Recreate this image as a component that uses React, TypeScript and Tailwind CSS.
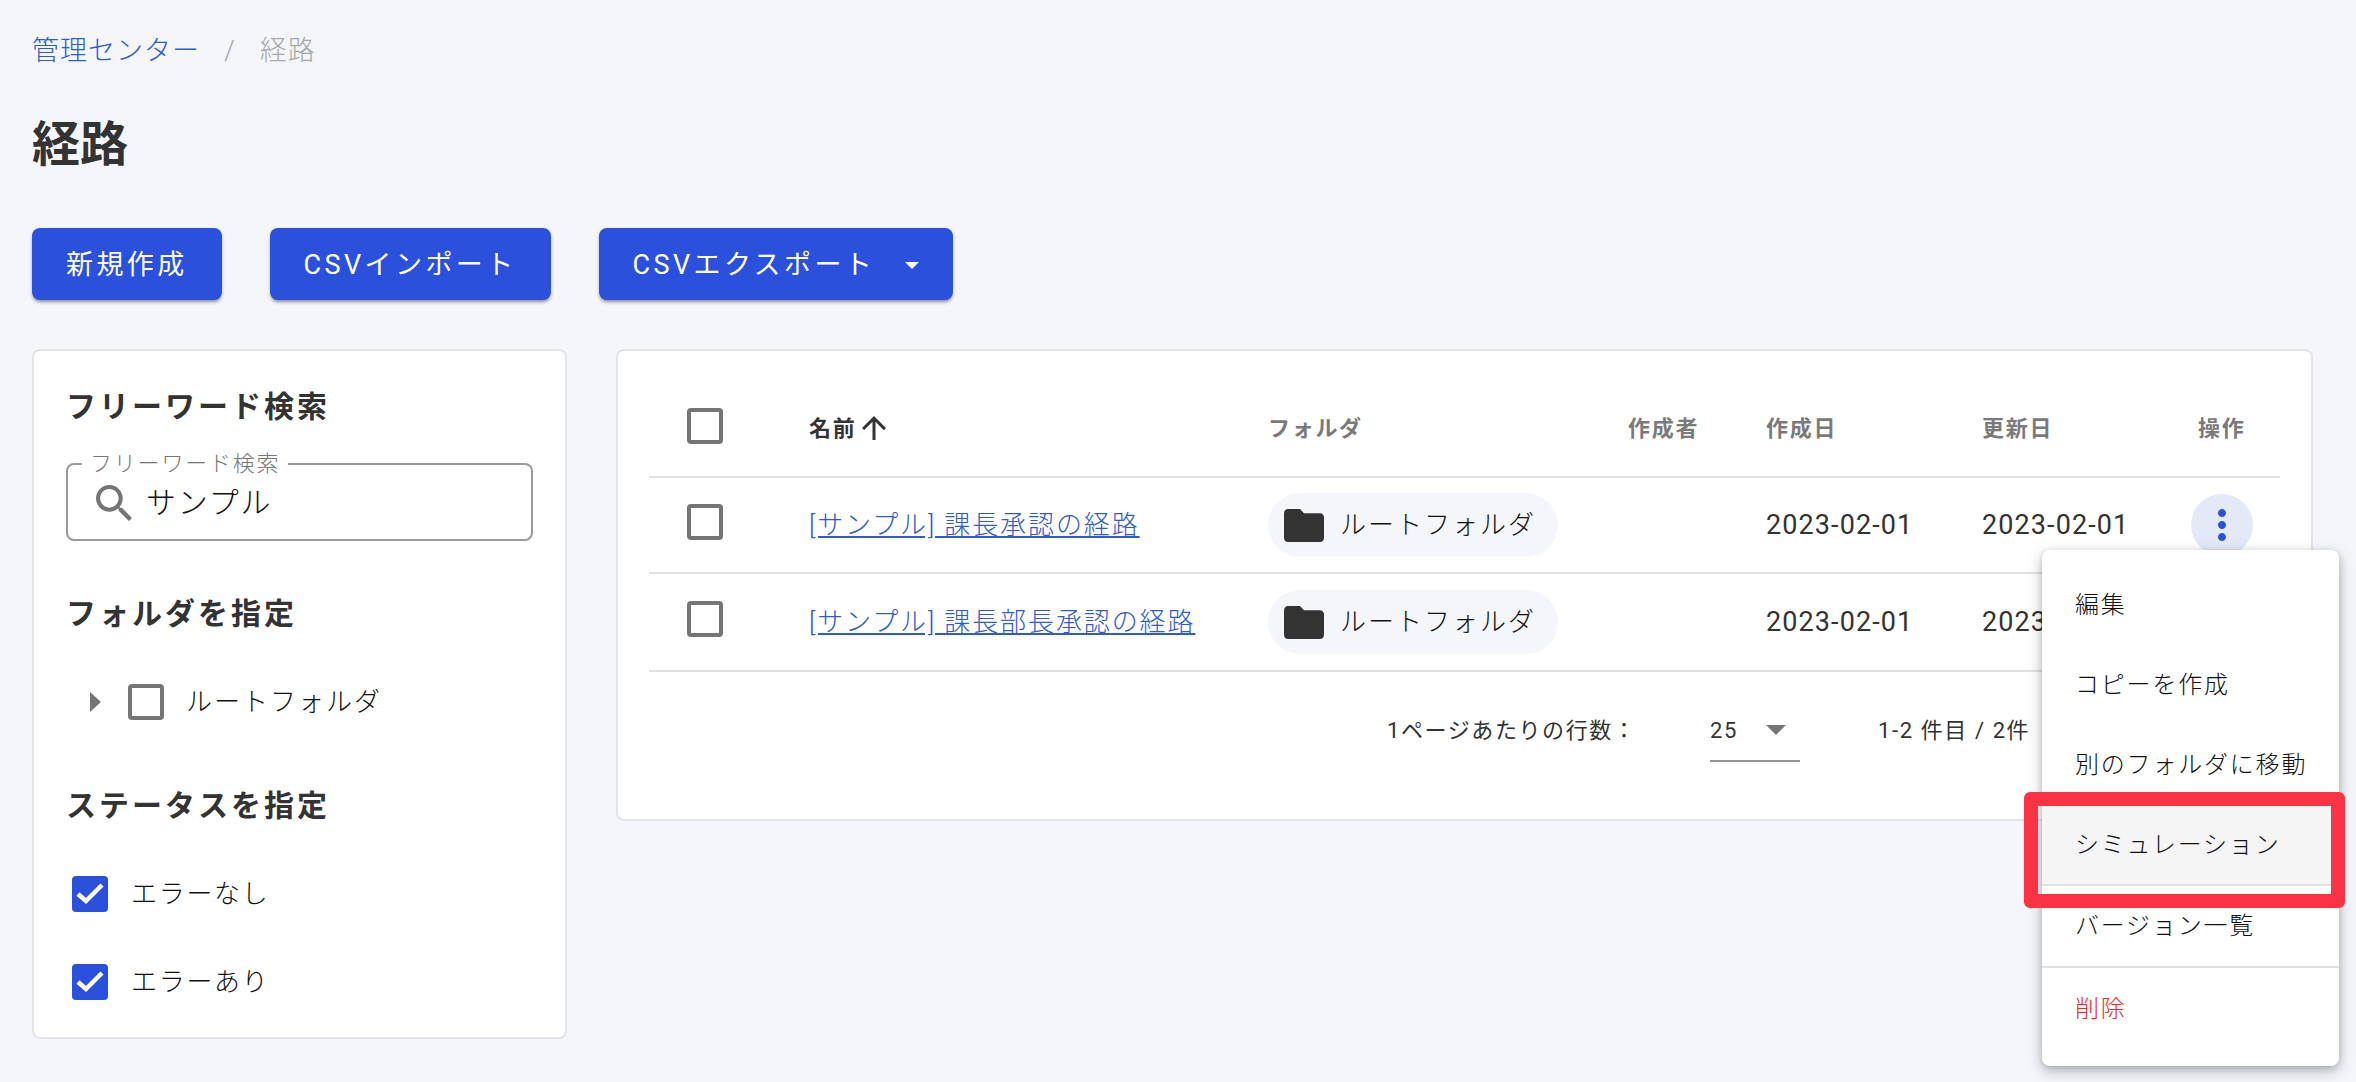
import React from "react";

const ROWS = ["[サンプル] 課長承認の経路", "[サンプル] 課長部長承認の経路"];
const COLS = "grid grid-cols-[160px_459px_360px_138px_216px_216px_82px] items-center";

const Box = () => (
  <span className="block w-[36px] h-[36px] rounded-[4px] border-[4px] border-[#757575]" />
);

const Checked = () => (
  <span className="flex items-center justify-center w-[36px] h-[36px] rounded-[4px] bg-[#2a50dc]">
    <svg viewBox="0 0 36 36" className="w-[36px] h-[36px]" fill="none" stroke="#fff" strokeWidth="4.5">
      <polyline points="6,18 14,25 30,9" />
    </svg>
  </span>
);

const Title = ({ children }: { children: React.ReactNode }) => (
  <h2 className="h-[40px] leading-[40px] text-[30px] font-bold tracking-[3px] text-[#333]">
    {children}
  </h2>
);

const Btn = ({ children }: { children: React.ReactNode }) => (
  <button className="flex items-center h-[72px] px-[34px] pt-[2px] rounded-[8px] bg-[#2a50dc] text-white text-[27px] font-normal tracking-[3.4px] shadow-[0_3px_3px_-1px_rgba(0,0,0,0.3),0_2px_4px_rgba(0,0,0,0.16)]">
    {children}
  </button>
);

const FolderChip = () => (
  <span className="flex items-center w-[290px] h-[64px] pl-[16px] rounded-full bg-[#f4f6fa] text-[26px] font-light text-[#111] tracking-[2px]">
    <svg viewBox="2 4 20 16" className="w-[40px] h-[33px]" fill="#333" preserveAspectRatio="none">
      <path d="M10 4H4c-1.1 0-1.99.9-1.99 2L2 18c0 1.1.9 2 2 2h16c1.1 0 2-.9 2-2V8c0-1.1-.9-2-2-2h-8l-2-2z" />
    </svg>
    <span className="ml-[16px]">ルートフォルダ</span>
  </span>
);

export default function App() {
  return (
    <div className="relative h-[1082px] overflow-hidden bg-[#f4f6fa] pt-[31px] px-[32px] text-[#333] font-[Roboto,'Noto_Sans_CJK_JP',sans-serif]">
      <nav className="flex items-center h-[40px] text-[27px] font-light tracking-[1px]">
        <span className="text-[#2f5bd0]">管理センター</span>
        <span className="mx-[24px] text-[#a8a8a8]">/</span>
        <span className="text-[#a8a8a8]">経路</span>
      </nav>

      <h1 className="mt-[42px] h-[64px] leading-[64px] text-[48px] font-bold">経路</h1>

      <div className="mt-[51px] flex gap-[48px]">
        <Btn>新規作成</Btn>
        <Btn>CSVインポート</Btn>
        <Btn>
          CSVエクスポート
          <span className="ml-[30px] w-0 h-0 border-x-[7px] border-x-transparent border-t-[7px] border-t-white" />
        </Btn>
      </div>

      <div className="mt-[49px] flex items-start gap-[49px] pr-[11px]">
        <aside className="w-[535px] h-[690px] shrink-0 rounded-[8px] border-2 border-[#e2e4e8] bg-white px-[32px] pt-[36px]">
          <Title>フリーワード検索</Title>
          <div className="relative mt-[36px] flex items-center h-[78px] pl-[28px] rounded-[8px] border-2 border-[#9a9a9a]">
            <span className="absolute left-[14px] -top-[14px] px-[8px] bg-white text-[22px] font-light leading-[26px] tracking-[1.8px] text-[#777]">
              フリーワード検索
            </span>
            <svg viewBox="3 3 17.5 17.5" className="w-[36px] h-[36px] mt-[2px]" fill="#757575">
              <path d="M15.5 14h-.79l-.28-.27C15.41 12.59 16 11.11 16 9.5 16 5.91 13.09 3 9.5 3S3 5.91 3 9.5 5.91 16 9.5 16c1.61 0 3.09-.59 4.23-1.57l.27.28v.79l5 4.99L20.49 19l-4.99-5zm-6 0C7.01 14 5 11.99 5 9.5S7.01 5 9.5 5 14 7.01 14 9.5 11.99 14 9.5 14z" />
            </svg>
            <span className="ml-[14px] text-[30px] font-light text-[#111] tracking-[1.8px]">サンプル</span>
          </div>

          <div className="mt-[53px]">
            <Title>フォルダを指定</Title>
          </div>
          <div className="mt-[50px] flex items-center h-[36px] pl-[24px] text-[26px] font-light text-[#111] tracking-[2px]">
            <span className="w-0 h-0 border-y-[10px] border-y-transparent border-l-[11px] border-l-[#757575]" />
            <span className="ml-[27px]"><Box /></span>
            <span className="ml-[22px]">ルートフォルダ</span>
          </div>

          <div className="mt-[66px]">
            <Title>ステータスを指定</Title>
          </div>
          <div className="mt-[50px] flex flex-col gap-[52px] pl-[6px] text-[26px] font-light text-[#111] tracking-[1.7px]">
            <div className="flex items-center h-[36px]">
              <Checked />
              <span className="ml-[23px]">エラーなし</span>
            </div>
            <div className="flex items-center h-[36px]">
              <Checked />
              <span className="ml-[23px]">エラーあり</span>
            </div>
          </div>
        </aside>

        <main className="flex-1 h-[472px] rounded-[8px] border-2 border-[#e2e4e8] bg-white px-[31px] pt-[29px]">
          <div className={`${COLS} h-[98px] border-b-2 border-[#e2e2e2] text-[22px] font-bold text-[#7a7a7a] tracking-[1.7px]`}>
            <div className="pl-[38px] pb-[4px]"><Box /></div>
            <div className="flex items-center text-[#333]">
              名前
              <svg viewBox="0 0 24 24" className="w-[36px] h-[36px]" fill="#333">
                <path d="M4 12l1.41 1.41L11 7.83V20h2V7.83l5.58 5.59L20 12l-8-8-8 8z" />
              </svg>
            </div>
            <div>フォルダ</div>
            <div>作成者</div>
            <div>作成日</div>
            <div>更新日</div>
            <div>操作</div>
          </div>

          {ROWS.map((name, i) => (
            <div key={name} className={`${COLS} ${i === 0 ? "h-[96px]" : "h-[98px]"} border-b-2 border-[#e2e2e2] text-[27px] tracking-[1.1px]`}>
              <div className="pl-[38px] pb-[6px]"><Box /></div>
              <a className="text-[26px] font-light text-[#2f5bd0] underline tracking-[1.9px]">{name}</a>
              <FolderChip />
              <div />
              <div>2023-02-01</div>
              <div>2023-02-01</div>
              <div className="flex">
                {i === 0 && (
                  <span className="flex items-center justify-center -ml-[7px] w-[62px] h-[62px] rounded-full bg-[#e4e9f8]">
                    <svg viewBox="0 0 24 24" className="w-[48px] h-[48px]" fill="#2a50dc">
                      <path d="M12 8c1.1 0 2-.9 2-2s-.9-2-2-2-2 .9-2 2 .9 2 2 2zm0 2c-1.1 0-2 .9-2 2s.9 2 2 2 2-.9 2-2-.9-2-2-2zm0 6c-1.1 0-2 .9-2 2s.9 2 2 2 2-.9 2-2-.9-2-2-2z" />
                    </svg>
                  </span>
                )}
              </div>
            </div>
          ))}

          <div className="ml-[738px] mt-[38px] grid grid-cols-[323px_168px_auto] items-center h-[40px] text-[22px] tracking-[1.6px]">
            <span>1ページあたりの行数：</span>
            <span className="relative flex items-center justify-between w-[90px] h-[40px] pr-[14px]">
              25
              <span className="w-0 h-0 border-x-[10px] border-x-transparent border-t-[10px] border-t-[#757575]" />
              <span className="absolute left-0 right-0 top-[50px] h-[2px] bg-[#949494]" />
            </span>
            <span>1-2 件目 / 2件</span>
          </div>
        </main>
      </div>

      <div className="absolute left-[2042px] top-[550px] w-[297px] h-[516px] py-[15px] rounded-[8px] bg-white text-[24px] font-light text-[#111] tracking-[1.8px] shadow-[0_5px_15px_rgba(0,0,0,0.25),0_2px_6px_rgba(0,0,0,0.14)]">
        <div className="flex items-center h-[80px] pl-[33px]">編集</div>
        <div className="flex items-center h-[80px] pl-[33px]">コピーを作成</div>
        <div className="flex items-center h-[80px] pl-[33px]">別のフォルダに移動</div>
        <div className="flex items-center h-[81px] pl-[33px] bg-[#f5f5f5] border-b-2 border-[#e2e2e2]">シミュレーション</div>
        <div className="flex items-center h-[82px] pl-[33px] border-b-2 border-[#e2e2e2]">バージョン一覧</div>
        <div className="flex items-center h-[81px] pl-[33px] text-[#f4261c]">削除</div>
      </div>

      <div className="absolute left-[2024px] top-[792px] w-[321px] h-[116px] rounded-[6px] border-[14px] border-[#fb3344]" />
    </div>
  );
}
